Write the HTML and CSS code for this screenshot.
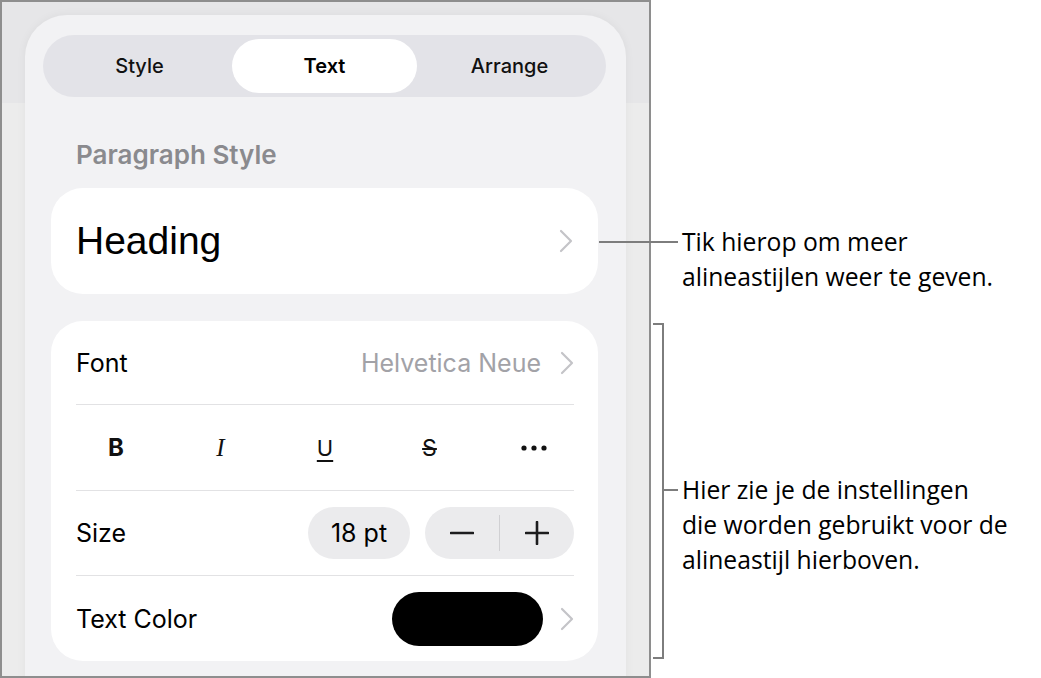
FILE: index.html
```html
<!DOCTYPE html>
<html lang="nl">
<head>
<meta charset="utf-8">
<title>Text</title>
<link rel="stylesheet" href="styles.css">
</head>
<body>
<div class="stage">
  <div class="frame">
    <div class="panel">
      <div class="segmented">
        <div class="seg">Style</div>
        <div class="seg seg-on">Text</div>
        <div class="seg">Arrange</div>
      </div>
      <div class="section-label">Paragraph Style</div>
      <div class="card heading-card">
        <span class="heading-text">Heading</span>
        <svg class="chev" width="14" height="24" viewBox="0 0 14 24"><path d="M2 2 L12 12 L2 22" fill="none" stroke="#c4c4c8" stroke-width="2.2" stroke-linecap="round" stroke-linejoin="round"/></svg>
      </div>
      <div class="card settings">
        <div class="row">
          <span class="row-label">Font</span>
          <span class="row-value">Helvetica Neue</span>
          <svg class="chev" width="14" height="24" viewBox="0 0 14 24"><path d="M2 2 L12 12 L2 22" fill="none" stroke="#c4c4c8" stroke-width="2.2" stroke-linecap="round" stroke-linejoin="round"/></svg>
        </div>
        <div class="row row-format">
          <span class="fmt fmt-b">B</span>
          <span class="fmt fmt-i">I</span>
          <span class="fmt fmt-u">U</span>
          <span class="fmt fmt-s">S</span>
          <span class="fmt fmt-more">
            <svg width="26" height="6" viewBox="0 0 26 6"><circle cx="3" cy="3" r="2.6" fill="#111"/><circle cx="13" cy="3" r="2.6" fill="#111"/><circle cx="23" cy="3" r="2.6" fill="#111"/></svg>
          </span>
        </div>
        <div class="row">
          <span class="row-label">Size</span>
          <span class="size-pill">18 pt</span>
          <span class="stepper">
            <span class="step">
              <svg width="24" height="24" viewBox="0 0 24 24"><path d="M1 12 H23" stroke="#1c1c1e" stroke-width="2.6" stroke-linecap="round"/></svg>
            </span>
            <span class="step-div"></span>
            <span class="step">
              <svg width="24" height="24" viewBox="0 0 24 24"><path d="M1 12 H23 M12 1 V23" stroke="#1c1c1e" stroke-width="2.6" stroke-linecap="round"/></svg>
            </span>
          </span>
        </div>
        <div class="row row-last">
          <span class="row-label">Text Color</span>
          <span class="swatch"></span>
          <svg class="chev" width="14" height="24" viewBox="0 0 14 24"><path d="M2 2 L12 12 L2 22" fill="none" stroke="#c4c4c8" stroke-width="2.2" stroke-linecap="round" stroke-linejoin="round"/></svg>
        </div>
      </div>
    </div>
  </div>
  <div class="notes">
    <p class="note note-1">Tik hierop om meer<br>alineastijlen weer te geven.</p>
    <p class="note note-2">Hier zie je de instellingen<br>die worden gebruikt voor de<br>alineastijl hierboven.</p>
  </div>
  <div class="leader leader-1"></div>
  <div class="bracket"></div>
  <div class="bracket-tick"></div>
</div>
</body>
</html>
```

FILE: styles.css
```css
* { box-sizing: border-box; }

html, body {
  margin: 0;
  padding: 0;
  background: #ffffff;
}

.stage {
  position: relative;
  display: flex;
  align-items: flex-start;
  width: 1041px;
  height: 678px;
}

.frame {
  flex: none;
  width: 651px;
  height: 678px;
  border: 2px solid #8e8e8e;
  overflow: hidden;
  background: linear-gradient(#e6e6e8 0, #e6e6e8 101px, #ececec 101px, #ececec 100%);
}

.panel {
  margin: 13px 0 0 23px;
  width: 601px;
  height: 700px;
  background: #f2f2f4;
  border-radius: 42px 42px 0 0;
  padding: 20px 20px 0 18px;
  box-shadow: 0 0 10px rgba(0, 0, 0, 0.05);
  font-family: Inter, "Liberation Sans", sans-serif;
  color: #000;
}

.segmented {
  display: grid;
  grid-template-columns: 1fr 1fr 1fr;
  height: 62px;
  padding: 4px;
  border-radius: 31px;
  background: #e3e3e8;
}

.seg {
  display: flex;
  align-items: center;
  justify-content: center;
  font-size: 20px;
  font-weight: 500;
  color: #111;
  border-radius: 27px;
}

.seg-on {
  background: #ffffff;
  font-weight: 600;
  color: #000;
}

.section-label {
  margin: 44px 0 0 33px;
  height: 28px;
  line-height: 28px;
  font-size: 26px;
  font-weight: 600;
  color: #8a8a8e;
}

.card {
  margin: 0 8px;
  background: #ffffff;
  border-radius: 32px;
}

.heading-card {
  margin-top: 19px;
  height: 106px;
  display: flex;
  align-items: center;
  padding: 0 25px 0 25px;
}

.heading-text {
  flex: 1;
  font-family: "Liberation Sans", Arial, sans-serif;
  font-size: 39px;
  color: #000;
}

.chev {
  flex: none;
  display: block;
}

.settings {
  margin-top: 27px;
  padding: 0 24px 0 25px;
}

.row {
  display: flex;
  align-items: center;
  height: 85px;
  border-bottom: 1.5px solid #e2e2e4;
  font-size: 25px;
}

.row:first-child { height: 84px; }

.row-last { border-bottom: none; }

.row-label {
  flex: 1;
  color: #000;
}

.row-value {
  color: #a2a2a7;
  margin-right: 19px;
}

.row-format {
  justify-content: space-between;
  height: 86px;
}

.fmt {
  width: 80px;
  display: flex;
  justify-content: center;
  align-items: center;
  color: #111;
  height: 30px;
}

.fmt-b {
  font-weight: 700;
  font-size: 24px;
}

.fmt-i {
  font-family: "Liberation Serif", serif;
  font-style: italic;
  font-size: 25px;
}

.fmt-u {
  font-size: 22px;
  font-weight: 400;
  text-decoration: underline;
  text-underline-offset: 4px;
  text-decoration-thickness: 2px;
}

.fmt-s {
  font-size: 23px;
  text-decoration: line-through;
  text-decoration-thickness: 1.5px;
}

.size-pill {
  width: 102px;
  height: 52px;
  border-radius: 26px;
  background: #ebebed;
  display: flex;
  align-items: center;
  justify-content: center;
  font-size: 25px;
  margin-right: 15px;
}

.stepper {
  width: 149px;
  height: 52px;
  border-radius: 26px;
  background: #ebebed;
  display: flex;
  align-items: center;
}

.step {
  flex: 1;
  display: flex;
  justify-content: center;
  align-items: center;
}

.step svg { display: block; }

.step-div {
  width: 1.5px;
  height: 36px;
  background: #d0d0d3;
}

.swatch {
  width: 151px;
  height: 54px;
  border-radius: 27px;
  background: #000;
  margin-right: 17px;
}

.notes {
  margin-left: 31px;
  font-family: "Open Sans", Lato, sans-serif;
  font-size: 24.7px;
  line-height: 35px;
  color: #000;
}

.note { margin: 0; }

.note-1 { margin-top: 224px; }

.note-2 { margin-top: 178px; }

.leader {
  position: absolute;
  background: #7d7d7d;
}

.leader-1 {
  left: 599px;
  top: 241px;
  width: 79px;
  height: 2px;
}

.bracket {
  position: absolute;
  left: 653px;
  top: 323px;
  width: 11px;
  height: 336px;
  border: 2px solid #7d7d7d;
  border-left: none;
}

.bracket-tick {
  position: absolute;
  left: 662px;
  top: 489px;
  width: 16px;
  height: 2px;
  background: #7d7d7d;
}
```
